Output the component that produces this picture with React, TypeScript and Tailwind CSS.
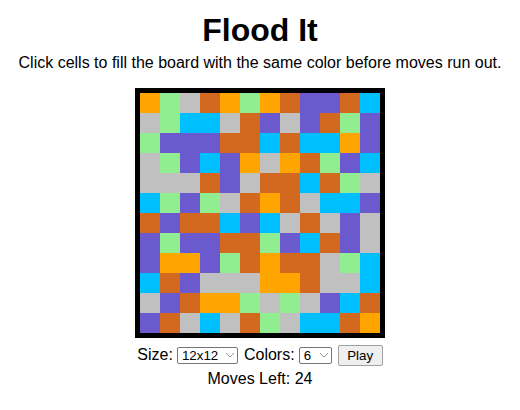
import React from "react";

const C: Record<string, string> = {
  o: "#FFA500",
  g: "#90EE90",
  s: "#C0C0C0",
  c: "#D2691E",
  p: "#6A5ACD",
  b: "#00BFFF",
};

const rows = [
  "o g s c o g o c p p c b",
  "s g b b s c p s p c g p",
  "g p p p c c b c b b o p",
  "s g p b p o s o c g p b",
  "s s s c p s c c b c g s",
  "b g p g s c o c s b b p",
  "c p c c b p b s c s p s",
  "p g p p c c g p b c p s",
  "p o o p g c o c c s g b",
  "b c p s s s o o c s s b",
  "s p c o o g s g s p b c",
  "p c s b s c g s b b c o",
].map((r) => r.split(" "));

function Chevron() {
  return (
    <svg
      className="pointer-events-none absolute right-[3px] top-1/2 -translate-y-1/2"
      width="10"
      height="6"
      viewBox="0 0 10 6"
    >
      <polyline points="1,1 5,5 9,1" fill="none" stroke="#9a9a9a" strokeWidth="1" />
    </svg>
  );
}

export default function App() {
  return (
    <div
      className="flex w-[520px] flex-col items-center bg-white pt-3 text-black"
      style={{ fontFamily: '"Liberation Sans", Arial, sans-serif' }}
    >
      <h1 className="text-[32px] font-bold leading-[37px]">Flood It</h1>
      <p className="mt-[5px] text-[16px] leading-[18px]">
        Click cells to fill the board with the same color before moves run out.
      </p>
      <div className="mt-[16px] grid grid-cols-12 border-[5px] border-black">
        {rows.flatMap((r, i) =>
          r.map((k, j) => (
            <div
              key={`${i}-${j}`}
              className="h-[20px] w-[20px]"
              style={{ backgroundColor: C[k] }}
            />
          ))
        )}
      </div>
      <div className="mt-[6px] flex h-[22px] items-center text-[16px] leading-[18px]">
        <span>Size:</span>
        <div className="relative ml-[4px]">
          <select
            defaultValue="12x12"
            className="block h-[17px] w-[61px] appearance-none rounded-[2px] border border-[#767676] bg-white pl-[4px] text-[13.33px] leading-[15px] text-black outline-none"
            style={{ fontFamily: '"Liberation Sans", Arial, sans-serif' }}
          >
            <option>8x8</option>
            <option>12x12</option>
            <option>16x16</option>
          </select>
          <Chevron />
        </div>
        <span className="ml-[6px]">Colors:</span>
        <div className="relative ml-[4px]">
          <select
            defaultValue="6"
            className="block h-[17px] w-[33px] appearance-none rounded-[2px] border border-[#767676] bg-white pl-[4px] text-[13.33px] leading-[15px] text-black outline-none"
            style={{ fontFamily: '"Liberation Sans", Arial, sans-serif' }}
          >
            <option>4</option>
            <option>5</option>
            <option>6</option>
          </select>
          <Chevron />
        </div>
        <button
          className="ml-[6px] h-[21px] w-[45px] rounded-[2px] border border-[#a0a0a0] bg-[#efefef] text-[13.33px] leading-[15px] text-black"
          style={{ fontFamily: '"Liberation Sans", Arial, sans-serif' }}
        >
          Play
        </button>
      </div>
      <div className="mt-[4px] text-[16px] leading-[18px]">Moves Left: 24</div>
    </div>
  );
}
